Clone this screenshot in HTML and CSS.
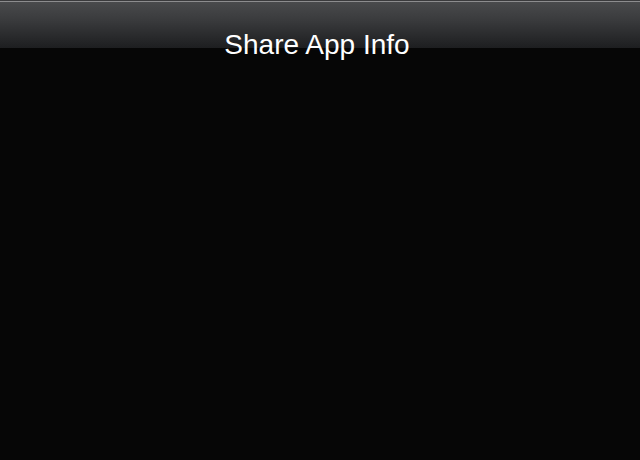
FILE: index.html
```html
<!DOCTYPE html>
<html>
<head>
<meta charset="utf-8">
<link rel="stylesheet" href="styles.css">
</head>
<body>
<header class="navbar">
  <h1 class="title">Share App Info</h1>
</header>
<main class="content"></main>
</body>
</html>
```
FILE: styles.css
```css
html, body {
  margin: 0;
  padding: 0;
  background: #060606;
  height: 100%;
}
body {
  font-family: "Liberation Sans", Arial, sans-serif;
}
.navbar {
  box-sizing: border-box;
  height: 48px;
  border-top: 1px solid #3a3a3c;
  box-shadow: inset 0 1px 0 #8c8c8e;
  background: linear-gradient(to bottom, #4a4b4d 0%, #3a3b3d 40%, #1d1e20 100%);
  padding-top: 29px;
  position: relative;
  z-index: 1;
}
.title {
  margin: 0;
  font-size: 28px;
  font-weight: normal;
  line-height: 30px;
  color: #ffffff;
  text-align: center;
  padding-right: 6px;
}
.content {
  height: 412px;
}
```
